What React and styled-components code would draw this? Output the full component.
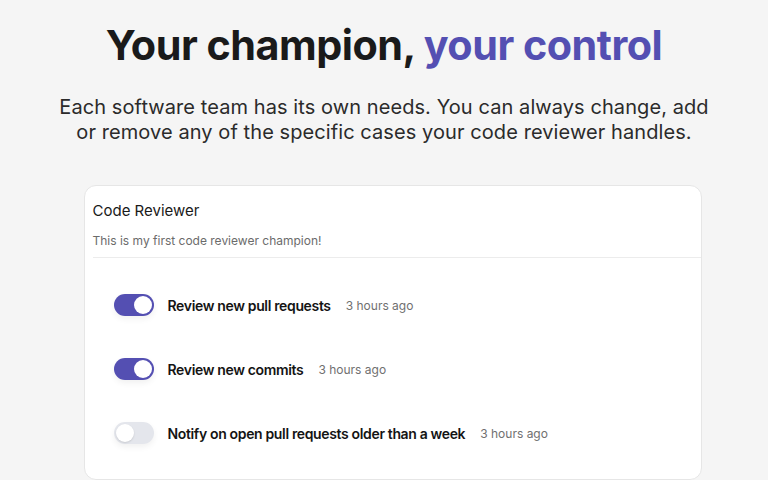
import React, { useState } from 'react';
import styled, { createGlobalStyle } from 'styled-components';

const GlobalStyle = createGlobalStyle`
  html, body {
    margin: 0;
    background: #f5f5f5;
    font-family: Inter, "Noto Sans", sans-serif;
    color: #1a1a1a;
  }
`;

const Page = styled.div`
  display: flex;
  flex-direction: column;
  align-items: center;
  padding-top: 19px;
  height: 480px;
  overflow: hidden;
  box-sizing: border-box;
`;

const Heading = styled.h1`
  margin: 0;
  font-size: 41.3px;
  font-weight: 700;
  letter-spacing: -0.5px;
  line-height: 52px;
  color: #1a1a1a;
  span {
    color: #544fb2;
  }
`;

const Lead = styled.p`
  margin: 24px 0 0;
  font-size: 20px;
  line-height: 25px;
  letter-spacing: 0.08px;
  text-align: center;
  color: #2b2b2b;
`;

const Card = styled.div`
  margin-top: 40px;
  width: 618px;
  margin-left: 17px;
  background: #fff;
  border: 1px solid #e6e6e6;
  border-radius: 12px;
  padding: 0 0 0 8px;
  box-sizing: border-box;
  height: 320px;
`;

const CardHeader = styled.div`
  padding: 13px 0 0;
  border-bottom: 1px solid #ececec;
  height: 72px;
  box-sizing: border-box;
`;

const CardTitle = styled.div`
  font-size: 15px;
  line-height: 24px;
  color: #1a1a1a;
`;

const CardSub = styled.div`
  margin-top: 10px;
  font-size: 12px;
  line-height: 16px;
  color: #6b6b6b;
`;

const Rules = styled.div`
  display: flex;
  flex-direction: column;
  gap: 42px;
  padding: 36px 0 0 21px;
`;

const Rule = styled.div`
  display: flex;
  align-items: center;
  height: 22px;
`;

const Switch = styled.button`
  position: relative;
  width: 40px;
  height: 22px;
  border-radius: 11px;
  border: none;
  padding: 0;
  margin-right: 14px;
  cursor: pointer;
  background: ${(p) => (p.$on ? '#544fb2' : '#e4e6ec')};
  box-shadow: 0 3px 6px rgba(0, 0, 0, 0.06);
  &::after {
    content: '';
    position: absolute;
    top: 2px;
    left: ${(p) => (p.$on ? '20px' : '2px')};
    width: 18px;
    height: 18px;
    border-radius: 50%;
    background: #fff;
    box-shadow: ${(p) => (p.$on ? 'none' : '0 1px 2px rgba(0,0,0,0.12)')};
  }
`;

const RuleName = styled.span`
  font-size: 14px;
  font-weight: 600;
  color: #141414;
  letter-spacing: -0.35px;
`;

const Time = styled.span`
  margin-left: 15px;
  font-size: 12px;
  color: #707070;
`;

const initialRules = [
  { name: 'Review new pull requests', on: true },
  { name: 'Review new commits', on: true },
  { name: 'Notify on open pull requests older than a week', on: false },
];

export default function App() {
  const [rules, setRules] = useState(initialRules);

  const toggle = (i) =>
    setRules((rs) => rs.map((r, j) => (j === i ? { ...r, on: !r.on } : r)));

  return (
    <>
      <GlobalStyle />
      <Page>
        <Heading>
          Your champion, <span>your control</span>
        </Heading>
        <Lead>
          Each software team has its own needs. You can always change, add
          <br />
          or remove any of the specific cases your code reviewer handles.
        </Lead>
        <Card>
          <CardHeader>
            <CardTitle>Code Reviewer</CardTitle>
            <CardSub>This is my first code reviewer champion!</CardSub>
          </CardHeader>
          <Rules>
            {rules.map((r, i) => (
              <Rule key={r.name}>
                <Switch $on={r.on} onClick={() => toggle(i)} aria-label={r.name} />
                <RuleName>{r.name}</RuleName>
                <Time>3 hours ago</Time>
              </Rule>
            ))}
          </Rules>
        </Card>
      </Page>
    </>
  );
}
